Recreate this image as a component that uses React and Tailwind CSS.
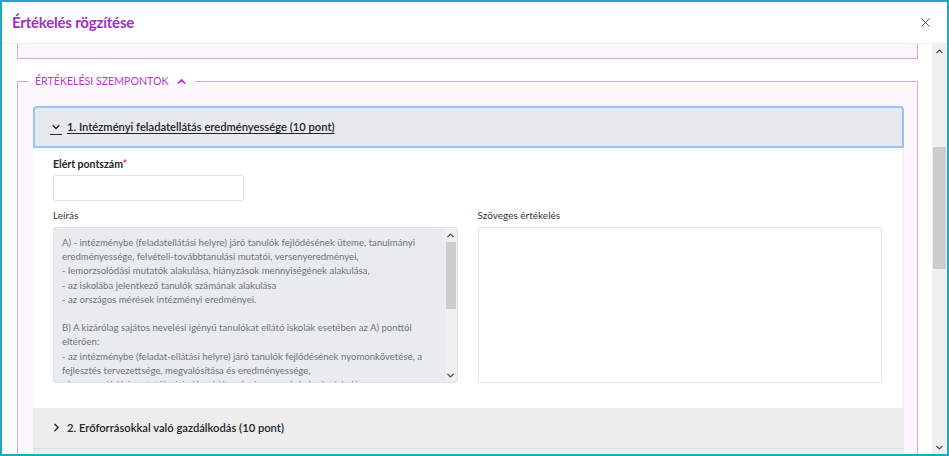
import React from 'react';
import { X, ChevronUp, ChevronDown, ChevronRight } from 'lucide-react';

const descLines = [
  'A) - intézménybe (feladatellátási helyre) járó tanulók fejlődésének üteme, tanulmányi',
  'eredményessége, felvételi-továbbtanulási mutatói, versenyeredményei,',
  '- lemorzsolódási mutatók alakulása, hiányzások mennyiségének alakulása,',
  '- az iskolába jelentkező tanulók számának alakulása',
  '- az országos mérések intézményi eredményei.',
  '',
  'B) A kizárólag sajátos nevelési igényű tanulókat ellátó iskolák esetében az A) ponttól',
  'eltérően:',
  '- az intézménybe (feladat-ellátási helyre) járó tanulók fejlődésének nyomonkövetése, a',
  'fejlesztés tervezettsége, megvalósítása és eredményessége,',
  '- lemorzsolódási mutatók alakulása, hiányzások mennyiségének alakulása,',
];

const Arrow = ({ up }) => (
  <svg width="7" height="5" viewBox="0 0 7 5" className="mx-auto">
    <path d={up ? 'M0.5 4 L3.5 1 L6.5 4' : 'M0.5 1 L3.5 4 L6.5 1'} fill="none" stroke="#505050" strokeWidth="1.2" />
  </svg>
);

const FakeScrollbar = ({ width, thumbTop, thumbHeight, className = '' }) => (
  <div className={`flex flex-col bg-[#f0f0f0] ${className}`} style={{ width }}>
    <div className="h-[14px] flex items-center"><Arrow up /></div>
    <div className="flex-1 relative">
      <div className="absolute left-[1px] right-[1px] bg-[#cdcdcd]" style={{ top: thumbTop, height: thumbHeight }} />
    </div>
    <div className="h-[14px] flex items-center"><Arrow /></div>
  </div>
);

export default function App() {
  return (
    <div className="w-[949px] h-[456px] border-2 border-[#22a6c8] bg-white flex flex-col overflow-hidden" style={{ fontFamily: 'Lato, "Open Sans", sans-serif' }}>
      {/* header */}
      <div className="h-[42px] shrink-0 flex items-center justify-between pl-[10px] pr-[14px] border-b border-[#ececec]">
        <h1 className="text-[15px] font-bold text-[#a22fc4] tracking-[-0.2px]">Értékelés rögzítése</h1>
        <X size={15} strokeWidth={1.6} className="text-[#555]" />
      </div>

      {/* body */}
      <div className="flex-1 flex min-h-0">
        <div className="flex-1 overflow-hidden pl-[15px] pr-[14px]">
          <div className="h-[15px] border-x border-b border-[#dba2ea] bg-[#fcf6fd]" />

          <fieldset className="mt-[15px] border border-[#dba2ea] bg-[#fcf6fd] pl-[15px] pr-[13px] pb-4 pt-[18px] relative">
            <legend className="ml-[-5px] px-[7px] flex items-center gap-[7px] text-[10.6px] text-[#b03cc8] uppercase leading-[14px]">
              Értékelési szempontok
              <ChevronUp size={13} strokeWidth={3} className="text-[#b03cc8]" />
            </legend>

            {/* accordion item 1 */}
            <div className="bg-white">
              <div className="h-[42px] bg-[#e7eaed] border-2 border-[#93c5f7] rounded-t-[4px] flex items-center pl-[15px]">
                <span className="flex items-center gap-[5px] text-[11.2px] font-semibold text-[#212529] underline underline-offset-2">
                  <span className="border-b border-[#212529] pb-[1px] mt-[2px]">
                    <ChevronDown size={12} strokeWidth={2.5} />
                  </span>
                  1. Intézményi feladatellátás eredményessége (10 pont)
                </span>
              </div>
              <div className="px-[20px] pt-[9px] pb-[25px] border-r-2 border-[#f2f2f5] text-[#212529]">
                <label className="block text-[10.5px] font-bold leading-[14px]">
                  Elért pontszám<span className="text-[#dc3545]">*</span>
                </label>
                <div className="mt-[4px] w-[191px] h-[26px] border border-[#dee2e6] rounded-[3px] bg-white" />

                <div className="mt-[7px] grid grid-cols-2 gap-[20px]">
                  <div>
                    <div className="text-[10px] leading-[14px] text-[#333]">Leírás</div>
                    <div className="mt-[5px] h-[156px] border border-[#dee2e6] rounded-[3px] bg-[#e9ecef] flex overflow-hidden">
                      <div className="flex-1 pl-[8px] pr-[4px] pt-[8px] text-[9.6px] leading-[14.2px] text-[#6c757d] overflow-hidden">
                        {descLines.map((l, i) => (
                          <div key={i} className="whitespace-nowrap h-[14.2px]">{l}</div>
                        ))}
                      </div>
                      <FakeScrollbar width={12} thumbTop={0} thumbHeight={67} />
                    </div>
                  </div>
                  <div>
                    <div className="text-[10px] leading-[14px] text-[#333]">Szöveges értékelés</div>
                    <div className="mt-[5px] h-[156px] border border-[#dee2e6] rounded-[3px] bg-white" />
                  </div>
                </div>
              </div>
            </div>

            {/* accordion item 2 */}
            <div className="h-[41px] bg-[#ededed] border-b border-[#dedede] flex items-center pl-[17px]">
              <span className="flex items-center gap-[4px] text-[11.2px] font-semibold text-[#212529]">
                <ChevronRight size={13} strokeWidth={2.5} />
                2. Erőforrásokkal való gazdálkodás (10 pont)
              </span>
            </div>
            <div className="h-[40px] bg-[#ededed]" />
          </fieldset>
        </div>

        <FakeScrollbar width={15} thumbTop={89} thumbHeight={122} className="shrink-0" />
      </div>
    </div>
  );
}
